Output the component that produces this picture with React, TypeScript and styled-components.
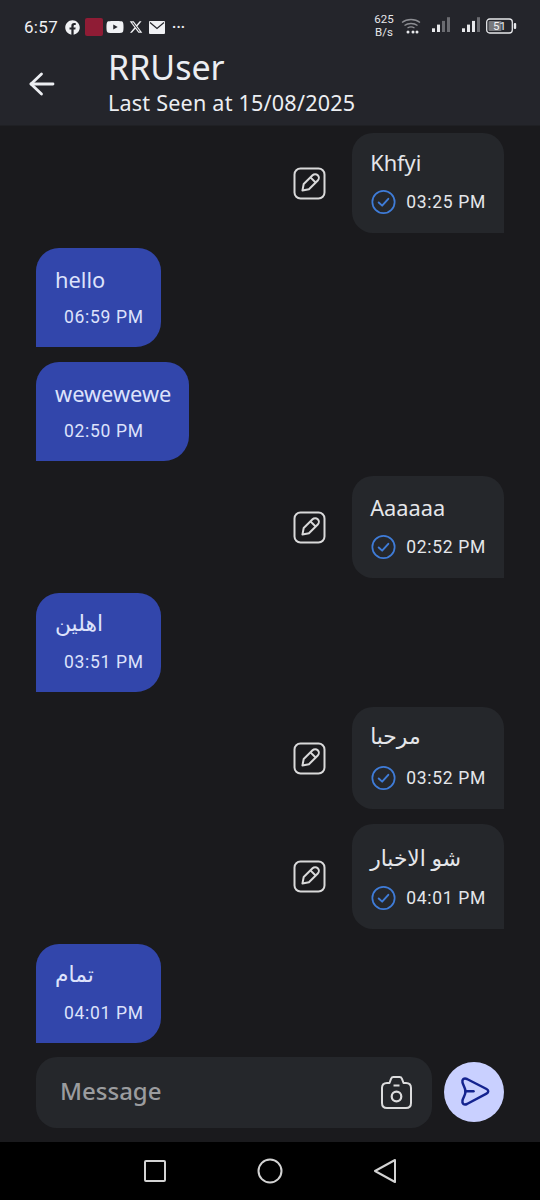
import React from "react";
import styled, { createGlobalStyle } from "styled-components";
import { FaFacebook, FaYoutube } from "react-icons/fa";
import { FaXTwitter } from "react-icons/fa6";

const Global = createGlobalStyle`
  html, body { margin: 0; padding: 0; background: #1a1a1d; }
  * { box-sizing: border-box; }
`;

const SANS = `"Noto Sans", "DejaVu Sans", sans-serif`;
const TIME = `Roboto, "Liberation Sans", sans-serif`;

const Screen = styled.div`
  width: 540px;
  height: 1200px;
  display: flex;
  flex-direction: column;
  overflow: hidden;
  background: #1a1a1d;
  font-family: ${SANS};
`;

const Header = styled.header`
  height: 126px;
  flex: none;
  background: #24252b;
  border-bottom: 1px solid #1f2024;
  color: #eceef2;
`;

const StatusBar = styled.div`
  height: 46px;
  padding: 8px 24px 0 24px;
  display: flex;
  align-items: flex-start;
  justify-content: space-between;
`;

const StatusLeft = styled.div`
  height: 38px;
  display: flex;
  align-items: center;
  color: #f0f1f4;
  font-family: ${TIME};
`;

const Clock = styled.span`
  font-size: 17px;
  font-weight: 400;
  width: 41px;
  letter-spacing: 0.3px;
`;

const NotifSquare = styled.span`
  width: 18px;
  height: 18px;
  margin: 0 3px 0 5px;
  border-radius: 2px;
  background: #8f1c35;
`;

const Dots = styled.span`
  margin-left: 7px;
  font-size: 14px;
  font-weight: 700;
  letter-spacing: 0.2px;
  line-height: 14px;
`;

const StatusRight = styled.div`
  height: 38px;
  margin-top: -1px;
  display: flex;
  align-items: center;
  color: #e6e7ea;
  margin-right: -1px;
`;

const Speed = styled.span`
  width: 26px;
  font-family: ${TIME};
  font-size: 11.5px;
  line-height: 13px;
  text-align: center;
`;

const TitleRow = styled.div`
  height: 80px;
  display: flex;
  align-items: center;
`;

const BackButton = styled.span`
  width: 108px;
  padding-left: 29px;
  margin-top: -4px;
  display: flex;
`;

const TitleBlock = styled.div`
  display: flex;
  flex-direction: column;
  margin-top: -11px;
`;

const Name = styled.div`
  font-size: 34px;
  line-height: 44px;
  letter-spacing: 0;
`;

const LastSeen = styled.div`
  font-size: 21.6px;
  line-height: 28px;
  letter-spacing: 0.2px;
`;

const List = styled.main`
  flex: 1;
  min-height: 0;
  padding: 7px 36px 0;
  display: flex;
  flex-direction: column;
  gap: 15px;
`;

const Row = styled.div<{ $mine: boolean }>`
  display: flex;
  align-items: center;
  justify-content: ${(p) => (p.$mine ? "flex-end" : "flex-start")};
`;

const Bubble = styled.div<{ $mine: boolean }>`
  padding: ${(p) => (p.$mine ? "17px 18px 0 18px" : "19px 17.5px 0 19px")};
  height: ${(p) => (p.$mine ? "auto" : "99px")};
  background: ${(p) => (p.$mine ? "#25272b" : "#3246ab")};
  color: ${(p) => (p.$mine ? "#e4e6ea" : "#dde2fb")};
  border-radius: ${(p) => (p.$mine ? "21px 21px 0 21px" : "23px 23px 25px 0")};
`;

const MessageText = styled.div<{ $height: number; $line: number }>`
  height: ${(p) => p.$height}px;
  font-size: 21.8px;
  line-height: ${(p) => p.$line}px;
  white-space: nowrap;
`;

const TimeRow = styled.div`
  display: flex;
  align-items: center;
  gap: 10px;
  height: 26px;
  margin-top: 12px;
  margin-bottom: 18px;
  padding-left: 1px;
`;

const PlainTime = styled.div`
  margin-left: 9px;
  margin-top: 12px;
  height: 22px;
`;

const Time = styled.span`
  font-family: ${TIME};
  font-size: 17.5px;
  line-height: 22px;
  letter-spacing: 0.7px;
  white-space: nowrap;
`;

const EditSlot = styled.span`
  display: flex;
  margin-right: 26px;
`;

const Composer = styled.div`
  height: 99px;
  flex: none;
  padding: 14px 36px 0;
  display: flex;
  align-items: flex-start;
  gap: 12px;
`;

const InputBox = styled.div`
  width: 396px;
  height: 71px;
  border-radius: 21px;
  background: #25272b;
  padding: 0 19px 0 24px;
  display: flex;
  align-items: center;
  justify-content: space-between;
`;

const Placeholder = styled.span`
  font-size: 24px;
  font-weight: 500;
  color: #9b9c9f;
  margin-top: -4px;
`;

const SendButton = styled.span`
  width: 60px;
  height: 60px;
  margin-top: 5px;
  border-radius: 50%;
  background: #c9d0ff;
  display: flex;
  align-items: center;
  justify-content: center;
`;

const NavBar = styled.nav`
  height: 58px;
  flex: none;
  background: #000;
  display: flex;
  align-items: center;
  justify-content: center;
  gap: 90px;
  padding-bottom: 1px;
`;

const Signal = ({ active, gap }: { active: number; gap: number }) => (
  <svg width="20" height="20" viewBox="0 0 20 20" style={{ marginLeft: gap }}>
    {[0, 1, 2, 3].map((i) => (
      <rect
        key={i}
        x={1 + i * 5}
        y={16 - (i + 1) * 3.7}
        width="3"
        height={(i + 1) * 3.7}
        fill={i < active ? "#e8e9ec" : "#6b6c71"}
      />
    ))}
  </svg>
);

const Wifi = () => (
  <svg width="20" height="20" viewBox="0 0 20 20" fill="none" stroke="#8d8e93" strokeWidth="1.3" style={{ marginLeft: 4 }}>
    <path d="M1 6.5C6 2.500 14 2.500 19 6.500" />
    <path d="M3.500 9.500C7 6.800 13 6.800 16.500 9.500" />
    <path d="M6.500 12C8.500 10.700 11.500 10.700 13.500 12" />
    <circle cx="7" cy="16" r="1.500" fill="#e8e9ec" stroke="none" />
    <circle cx="12" cy="16" r="1.500" fill="#e8e9ec" stroke="none" />
    <circle cx="16" cy="16" r="1.500" fill="#e8e9ec" stroke="none" />
  </svg>
);

const Battery = () => (
  <svg width="31" height="16" viewBox="0 0 31 16" style={{ marginLeft: 5 }}>
    <rect x="0.700" y="1" width="25.600" height="14" rx="3" fill="none" stroke="#e6e7ea" strokeWidth="1.300" />
    <rect x="2.500" y="3" width="13" height="10" rx="1" fill="#77787c" />
    <rect x="27.800" y="5" width="2.400" height="6" rx="1" fill="#e6e7ea" />
    <text x="13.500" y="12.300" textAnchor="middle" fontSize="11.500" fontFamily="Roboto, sans-serif" fill="#f2f2f4">51</text>
  </svg>
);

const MailIcon = () => (
  <svg width="16" height="13" viewBox="0 0 16 13" style={{ marginLeft: 6 }}>
    <rect width="16" height="13" rx="1" fill="#f0f1f4" />
    <path d="M1 1.500l7 6 7-6" fill="none" stroke="#24252b" strokeWidth="1.200" />
  </svg>
);

const BackArrow = () => (
  <svg width="26" height="24" viewBox="0 0 26 24" fill="none" stroke="#eceef2" strokeWidth="2.800" strokeLinecap="round" strokeLinejoin="round">
    <path d="M2 12h22" />
    <path d="M12.500 2 2 12l10.500 10" />
  </svg>
);

const EditIcon = () => (
  <svg width="33" height="33" viewBox="0 0 33 33" fill="none" stroke="#d9d9da" strokeWidth="2">
    <rect x="1.500" y="1.500" width="30" height="30" rx="6" />
    <g transform="rotate(45 16.500 16.500)" strokeLinejoin="round">
      <path d="M12.800 8.500a3.700 3.700 0 0 1 7.400 0V21l-3.700 5.500L12.800 21z" />
      <path d="M12.800 11.500h7.400" />
    </g>
  </svg>
);

const CheckCircle = () => (
  <svg width="25" height="26" viewBox="0 0 26 26" fill="none" stroke="#3f7cd8" strokeWidth="1.800" strokeLinecap="round" strokeLinejoin="round">
    <circle cx="13" cy="13" r="11.600" />
    <path d="M8 13.500l3.600 3.300L18 9.700" strokeWidth="2" />
  </svg>
);

const CameraIcon = () => (
  <svg width="33" height="35" viewBox="0 0 33 35" fill="none" stroke="#dcdcdd" strokeWidth="2" strokeLinejoin="round">
    <path d="M9.500 8 11 3.800Q11.700 2 13.500 2h6q1.800 0 2.500 1.800L23.500 8H26q5 0 5 5v15q0 5-5 5H7q-5 0-5-5V13q0-5 5-5z" />
    <circle cx="16.500" cy="21.500" r="4.800" strokeWidth="2.200" />
    <path d="M13.500 10.500h6" />
  </svg>
);

const SendIcon = () => (
  <svg width="32" height="32" viewBox="0 0 32 32" fill="none" stroke="#14238f" strokeWidth="2.500" strokeLinejoin="round" strokeLinecap="round">
    <path d="M4.500 6.500C3.800 3.300 6 1.800 9 3L28.500 13c2.300 1.200 2.300 3.500 0 4.700L9 28c-3 1.200-5.200-.3-4.500-3.500C5.200 21.500 7.500 19 7.500 15.500S5.200 9.500 4.500 6.500z" />
    <path d="M7.500 15.300H15.500" />
  </svg>
);

const NavSquare = () => (
  <svg width="24" height="24" viewBox="0 0 24 24" fill="none" stroke="#d3d3d3" strokeWidth="2">
    <rect x="2" y="2" width="20" height="20" rx="1" />
  </svg>
);

const NavCircle = () => (
  <svg width="26" height="26" viewBox="0 0 26 26" fill="none" stroke="#d3d3d3" strokeWidth="2">
    <circle cx="13" cy="13" r="11.500" />
  </svg>
);

const NavBack = () => (
  <svg width="24" height="26" viewBox="0 0 24 26" fill="none" stroke="#d3d3d3" strokeWidth="2" strokeLinejoin="round">
    <path d="M22 2 2 13l20 11z" />
  </svg>
);

type Msg = { mine: boolean; text: string; time: string; height: number; line: number };

const messages: Msg[] = [
  { mine: true, text: "Khfyi", time: "03:25 PM", height: 27, line: 25 },
  { mine: false, text: "hello", time: "06:59 PM", height: 27, line: 25 },
  { mine: false, text: "wewewewe", time: "02:50 PM", height: 27, line: 25 },
  { mine: true, text: "Aaaaaa", time: "02:52 PM", height: 29, line: 29 },
  { mine: false, text: "اهلين", time: "03:51 PM", height: 27, line: 21 },
  { mine: true, text: "مرحبا", time: "03:52 PM", height: 29, line: 23 },
  { mine: true, text: "شو الاخبار", time: "04:01 PM", height: 32, line: 33 },
  { mine: false, text: "تمام", time: "04:01 PM", height: 27, line: 21 },
];

export default function App() {
  return (
    <Screen>
      <Global />
      <Header>
        <StatusBar>
          <StatusLeft>
            <Clock>6:57</Clock>
            <FaFacebook size={15} />
            <NotifSquare />
            <FaYoutube size={18} />
            <FaXTwitter size={14} style={{ marginLeft: 5 }} />
            <MailIcon />
            <Dots>···</Dots>
          </StatusLeft>
          <StatusRight>
            <Speed>625<br />B/s</Speed>
            <Wifi />
            <Signal active={2} gap={10} />
            <Signal active={3} gap={10} />
            <Battery />
          </StatusRight>
        </StatusBar>
        <TitleRow>
          <BackButton><BackArrow /></BackButton>
          <TitleBlock>
            <Name>RRUser</Name>
            <LastSeen>Last Seen at 15/08/2025</LastSeen>
          </TitleBlock>
        </TitleRow>
      </Header>
      <List>
        {messages.map((m, i) => (
          <Row key={i} $mine={m.mine}>
            {m.mine && <EditSlot><EditIcon /></EditSlot>}
            <Bubble $mine={m.mine}>
              <MessageText $height={m.height} $line={m.line}>{m.text}</MessageText>
              {m.mine ? (
                <TimeRow><CheckCircle /><Time>{m.time}</Time></TimeRow>
              ) : (
                <PlainTime><Time>{m.time}</Time></PlainTime>
              )}
            </Bubble>
          </Row>
        ))}
      </List>
      <Composer>
        <InputBox>
          <Placeholder>Message</Placeholder>
          <CameraIcon />
        </InputBox>
        <SendButton><SendIcon /></SendButton>
      </Composer>
      <NavBar>
        <NavSquare />
        <NavCircle />
        <NavBack />
      </NavBar>
    </Screen>
  );
}
